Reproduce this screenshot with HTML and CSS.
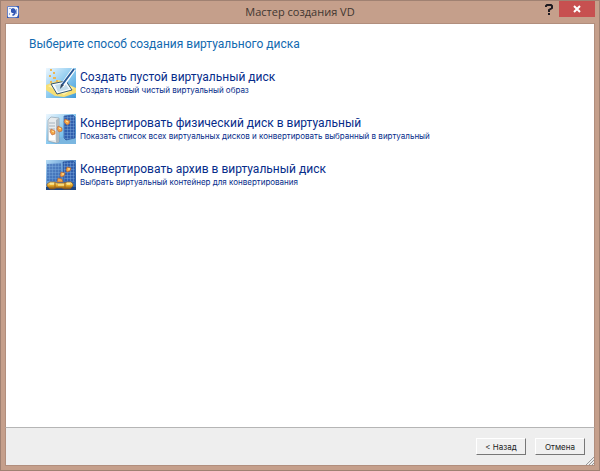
FILE: index.html
```html
<!DOCTYPE html>
<html lang="ru">
<head>
<meta charset="utf-8">
<title>Мастер создания VD</title>
<link rel="stylesheet" href="styles.css">
</head>
<body>
<div class="window">
  <header class="titlebar">
    <svg class="app-icon" viewBox="0 0 12 12" aria-hidden="true">
      <path fill="#f4f6fc" stroke="#6a84c6" d="M.5.5h11v11H.5z"/>
      <path fill="#3156b4" d="M9 0h3v3zM0 10l2 2H0zM12 7v5H8l2-1zM4 3l2-1 2 1 1 2c0 3-1 4-3 5l-1-1 2-2H5L4 6z"/>
      <path fill="#91a9dc" d="M2 2h2v1H2zM9 3h1v5H9zM2 7h1v2H2z"/>
    </svg>
    <h1 class="title">Мастер создания VD</h1>
    <div class="controls">
      <button class="help" type="button" aria-label="Справка">
        <svg class="help-icon" viewBox="0 0 8 11" aria-hidden="true"><path fill="none" stroke="#1e1a20" stroke-width="2" d="M1 3V2l1-1h4l1 1v2L4 6v2M3 10h2"/></svg>
      </button>
      <button class="close" type="button" aria-label="Закрыть">
        <svg class="close-icon" viewBox="0 0 8 8" aria-hidden="true"><path stroke="#fff" stroke-width="2" d="M1 1l6 6M7 1L1 7"/></svg>
      </button>
    </div>
  </header>
  <main class="content">
    <h2 class="heading">Выберите способ создания виртуального диска</h2>
    <div class="options">
      <button class="option" type="button">
        <svg class="option-icon" viewBox="0 0 30 30" aria-hidden="true">
          <defs>
            <linearGradient id="sky" x2="1" y2="1"><stop stop-color="#eef8ff"/><stop offset=".5" stop-color="#8dcbf0"/><stop offset="1" stop-color="#429bd8"/></linearGradient>
            <linearGradient id="deep" x2="1" y2="1"><stop stop-color="#b5dcf5"/><stop offset=".5" stop-color="#5790cf"/><stop offset="1" stop-color="#235aa5"/></linearGradient>
            <linearGradient id="gold" x2="0" y2="1"><stop stop-color="#fff4a0"/><stop offset=".5" stop-color="#e5a825"/><stop offset="1" stop-color="#805018"/></linearGradient>
            <pattern id="grid" width="3" height="3" patternUnits="userSpaceOnUse"><path fill="#315fae" d="M0 0h3v3H0z"/><path fill="none" stroke="#80aee2" stroke-width=".8" d="M0 0h3M0 0v3"/></pattern>
          </defs>
          <path fill="url(#sky)" d="M0 0h30v30H0z"/>
          <path fill="#f6df75" d="M0 17l13-5 17 8v5l-12 4-9-1-9-6z"/>
          <path fill="#fff2aa" d="M2 18l12-4 14 6-10 7z"/>
          <path fill="#f5fbff" stroke="#345777" d="M5 16l15-3 6 9-15 4z"/>
          <path fill="#c4ddeb" d="M9 17l10-2 4 6-11 3z"/>
          <path stroke="#fff" stroke-width="4" d="M28 1L16 18"/>
          <path stroke="#285a98" stroke-width="2" d="M28 1L16 17"/>
          <path fill="#304865" d="M15 16l3 1-4 4z"/>
          <path fill="#edb653" d="M4 1h2v2H4zM7 4h2v2H7zM3 7h2v2H3zM7 9h3v2H7zM4 13h2v2H4zM10 12h2v2h-2z"/>
        </svg>
        <span class="option-text"><span class="option-title">Создать пустой виртуальный диск</span><span class="option-note">Создать новый чистый виртуальный образ</span></span>
      </button>
      <button class="option" type="button">
        <svg class="option-icon" viewBox="0 0 30 30" aria-hidden="true">
          <path fill="url(#sky)" d="M0 0h30v30H0z"/>
          <path fill="#7ab6e0" d="M12 24l18-4v10H10z"/>
          <path fill="url(#grid)" stroke="#254e98" stroke-width=".6" d="M18 2l9-1 2 2v21l-9 2-2-2z"/>
          <path fill="#e7ebed" stroke="#8495a2" stroke-width=".6" d="M2 6l3-3 8 1v24l-3 1-8-2z"/>
          <path fill="#aeb9c1" d="M10 6l3-2v24l-3 1z"/>
          <path stroke="#a6b3bd" d="M3 9h6M3 12h6M3 15h6"/>
          <path fill="#fff" d="M3 18h6v8H3z"/>
          <g fill="#f3a445" stroke="#bd6138" stroke-width=".6"><path d="M19 5l5 2-1 3-2 1-3-3zM12 12l4 2v3l-3 1-2-3zM5 15l4 2v3l-3 1-2-3z"/></g>
          <path stroke="#fff0ac" d="M20 7l2 1M13 14l2 1M6 17l2 1"/>
        </svg>
        <span class="option-text"><span class="option-title">Конвертировать физический диск в виртуальный</span><span class="option-note">Показать список всех виртуальных дисков и конвертировать выбранный в виртуальный</span></span>
      </button>
      <button class="option" type="button">
        <svg class="option-icon" viewBox="0 0 30 30" aria-hidden="true">
          <path fill="url(#deep)" d="M0 0h30v30H0z"/>
          <path fill="url(#grid)" opacity=".65" d="M1 4l14-1v18H1z"/>
          <path fill="url(#grid)" stroke="#244d94" stroke-width=".6" d="M17 2l10-1 2 2v19H18z"/>
          <path fill="#1f477f" d="M0 27h30v3H0z"/>
          <path fill="url(#gold)" stroke="#8c581c" stroke-width=".7" d="M1 24l3-2h5l2 1h8l2-1h4l2 2v2l-3 3h-6l-2-1h-6l-2 1H4l-3-3z"/>
          <path stroke="#fff6b0" d="M4 24h4M12 25h6M21 24h3"/>
          <path stroke="#9b641a" d="M9 22v6M19 22v6"/>
          <g fill="#f3a747" stroke="#a55931" stroke-width=".6"><path d="M21 7l4 1-1 3-3 1-1-2zM15 12l4 1-1 3-3 1-1-2zM12 18l4 1 1 3h-6z"/></g>
          <path stroke="#fff0ac" d="M22 9h2M16 14h2"/>
        </svg>
        <span class="option-text"><span class="option-title">Конвертировать архив в виртуальный диск</span><span class="option-note">Выбрать виртуальный контейнер для конвертирования</span></span>
      </button>
    </div>
  </main>
  <footer class="footer">
    <button class="action" type="button">&lt; Назад</button>
    <button class="action" type="button">Отмена</button>
    <svg class="grip" viewBox="0 0 8 8" aria-hidden="true"><path stroke="#999" d="M0 8l8-8M3 8l5-5M6 8l2-2"/></svg>
  </footer>
</div>
</body>
</html>
```
FILE: styles.css
```css
* {
  box-sizing: border-box;
}

body {
  margin: 0;
  font-family: Roboto, "Liberation Sans", sans-serif;
}

button {
  font: inherit;
  padding: 0;
  border: 0;
  background: none;
}

.window {
  display: flex;
  flex-direction: column;
  min-height: 100vh;
  padding: 0 4px 4px;
  border: 1px solid #a08172;
  background: #c59f8b;
}

.titlebar {
  display: grid;
  grid-template-columns: 1fr auto 1fr;
  height: 22px;
}

.app-icon {
  width: 12px;
  height: 12px;
  margin: 5px 2px;
}

.title {
  margin: 0;
  font: 11px/22px "Open Sans", "Noto Sans", sans-serif;
  color: #413630;
}

.controls {
  display: flex;
  justify-content: flex-end;
  align-items: flex-start;
  gap: 6px;
}

.help {
  display: grid;
  place-items: center;
  width: 8px;
  height: 16px;
}

.help-icon {
  width: 8px;
  height: 11px;
}

.close {
  display: grid;
  place-items: center;
  width: 36px;
  height: 16px;
  background: #c75050;
}

.close-icon {
  width: 8px;
  height: 8px;
}

.content {
  flex: 1;
  padding: 12px 23px;
  border: 1px solid #b18e7d;
  border-bottom: 0;
  background: #fff;
}

.heading {
  margin: 0;
  font-size: 12px;
  font-weight: 400;
  line-height: 16px;
  color: #126ab0;
}

.options {
  display: flex;
  flex-direction: column;
  gap: 16px;
  padding: 16px 17px;
}

.option {
  display: flex;
  align-items: flex-start;
  gap: 4px;
  text-align: left;
  color: #062c8a;
}

.option-icon {
  flex: none;
  width: 30px;
  height: 30px;
}

.option-text {
  display: flex;
  flex-direction: column;
}

.option-title {
  font-size: 12px;
  line-height: 18px;
}

.option-note {
  font: 8px/9px Inter, sans-serif;
}

.footer {
  position: relative;
  display: flex;
  justify-content: flex-end;
  gap: 9px;
  padding: 10px 9px;
  border: 1px solid #b18e7d;
  border-top-color: #b5b5b5;
  background: #eee;
}

.action {
  width: 50px;
  height: 17px;
  border: 1px solid;
  border-color: #fff #777 #777 #fff;
  background: #f0f0f0;
  font: 8px/14px Inter, sans-serif;
  color: #222;
}

.grip {
  position: absolute;
  right: 0;
  bottom: 0;
  width: 8px;
  height: 8px;
}
```
